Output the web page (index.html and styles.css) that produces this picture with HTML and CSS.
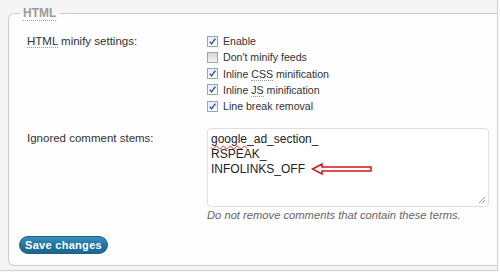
FILE: index.html
```html
<!DOCTYPE html>
<html>
<head>
<meta charset="utf-8">
<link rel="stylesheet" href="styles.css">
</head>
<body>
<div class="frame">
  <fieldset class="box">
    <legend class="legend"><abbr class="abbr">HTML</abbr></legend>
    <div class="row">
      <div class="label"><abbr class="abbr">HTML</abbr> minify settings:</div>
      <div class="checks">
        <label class="check"><span class="cb on"><svg viewBox="0 0 10 10"><path d="M2 5.2 L4 7.6 L8.2 1.8" /></svg></span><span>Enable</span></label>
        <label class="check"><span class="cb"></span><span>Don't minify feeds</span></label>
        <label class="check"><span class="cb on"><svg viewBox="0 0 10 10"><path d="M2 5.2 L4 7.6 L8.2 1.8" /></svg></span><span>Inline <abbr class="abbr">CSS</abbr> minification</span></label>
        <label class="check"><span class="cb on"><svg viewBox="0 0 10 10"><path d="M2 5.2 L4 7.6 L8.2 1.8" /></svg></span><span>Inline <abbr class="abbr">JS</abbr> minification</span></label>
        <label class="check"><span class="cb on"><svg viewBox="0 0 10 10"><path d="M2 5.2 L4 7.6 L8.2 1.8" /></svg></span><span>Line break removal</span></label>
      </div>
    </div>
    <div class="row row2">
      <div class="label">Ignored comment stems:</div>
      <div class="field">
        <div class="textarea">
          <div class="line"><span class="spell">google</span>_ad_section_</div>
          <div class="line">RSPEAK_</div>
          <div class="line">INFOLINKS_OFF</div>
          <svg class="arrow" width="64" height="16" viewBox="0 0 64 16"><path d="M1.5 8 L11 3 L11 6 L60 6 L60 10 L11 10 L11 13 Z" /></svg>
          <svg class="grip" width="8" height="8" viewBox="0 0 8 8"><path d="M7 1 L1 7 M7 4 L4 7" /></svg>
        </div>
        <div class="hint">Do not remove comments that contain these terms.</div>
      </div>
    </div>
    <div class="actions">
      <button class="save">Save changes</button>
    </div>
  </fieldset>
</div>
</body>
</html>
```

FILE: styles.css
```css
html, body {
  margin: 0;
  padding: 0;
  background: #fafafa;
}
body {
  font-family: "Liberation Sans", Arial, sans-serif;
  font-size: 11px;
  color: #333;
}
.frame {
  box-sizing: border-box;
  width: 498px;
  height: 271px;
  border-right: 1px solid #d2d2d2;
  border-bottom: 1px solid #d2d2d2;
  padding-top: 6px;
  background: #f5f5f5;
}
.box {
  margin: 0 0 0 8px;
  padding: 0 0 11px 0;
  border: 1px solid #cccccc;
  border-right: none;
  border-radius: 6px 0 0 6px;
  background: #fdfdfd;
  min-width: 0;
}
.legend {
  margin-left: 11px;
  padding: 0 3px;
  font-size: 12px;
  line-height: 14px;
  font-weight: bold;
  color: #9a9a9a;
}
.abbr {
  text-decoration: none;
  border-bottom: 1px dotted #999;
}
.row {
  display: grid;
  grid-template-columns: 180px 1fr;
  padding-left: 18px;
  margin-top: 13px;
}
.label {
  font-size: 11.5px;
  line-height: 16px;
  color: #333;
}
.checks {
  display: flex;
  flex-direction: column;
}
.check {
  display: flex;
  align-items: center;
  height: 16.25px;
  line-height: 16px;
  font-size: 10.6px;
  color: #333;
}
.cb {
  width: 9px;
  height: 9px;
  border: 1px solid #98a4b4;
  background: linear-gradient(#d8d8d8, #f4f4f4);
  margin-right: 5px;
  position: relative;
  flex: none;
}
.cb.on {
  background: linear-gradient(#e8ecf2, #ffffff);
}
.cb svg {
  position: absolute;
  left: 0;
  top: 0;
  width: 9px;
  height: 9px;
}
.cb svg path {
  fill: none;
  stroke: #2f55a8;
  stroke-width: 1.6;
}
.row2 {
  margin-top: 14px;
}
.row2 .label {
  padding-top: 2px;
}
.field {
  display: flex;
  flex-direction: column;
}
.textarea {
  position: relative;
  box-sizing: border-box;
  width: 282px;
  height: 79px;
  border: 1px solid #dfdfdf;
  border-radius: 4px;
  background: #fff;
  padding: 3px 3px;
  font-size: 12px;
  line-height: 15px;
  color: #222;
}
.line {
  white-space: nowrap;
}
.spell {
  text-decoration: underline wavy #e03030;
  text-decoration-thickness: 1px;
  text-underline-offset: 2px;
}
.arrow {
  position: absolute;
  left: 103px;
  top: 32px;
}
.arrow path {
  fill: #fff;
  stroke: #d01818;
  stroke-width: 1.5;
  stroke-linejoin: miter;
}
.grip {
  position: absolute;
  right: 2px;
  bottom: 2px;
}
.grip path {
  stroke: #999;
  stroke-width: 1;
  fill: none;
}
.hint {
  margin-top: 1px;
  font-style: italic;
  color: #666;
  font-size: 11.2px;
  line-height: 14px;
}
.actions {
  padding-left: 10px;
  margin-top: 14px;
  display: flex;
}
.save {
  font-family: "Liberation Sans", Arial, sans-serif;
  font-size: 11px;
  font-weight: bold;
  color: #fff;
  border: 1px solid #1b6088;
  border-radius: 9px;
  background: linear-gradient(#3c8fbc, #21729d 55%, #1c6890);
  width: 89px;
  height: 18px;
  padding: 0;
  line-height: 15px;
  letter-spacing: 0.3px;
}
```
